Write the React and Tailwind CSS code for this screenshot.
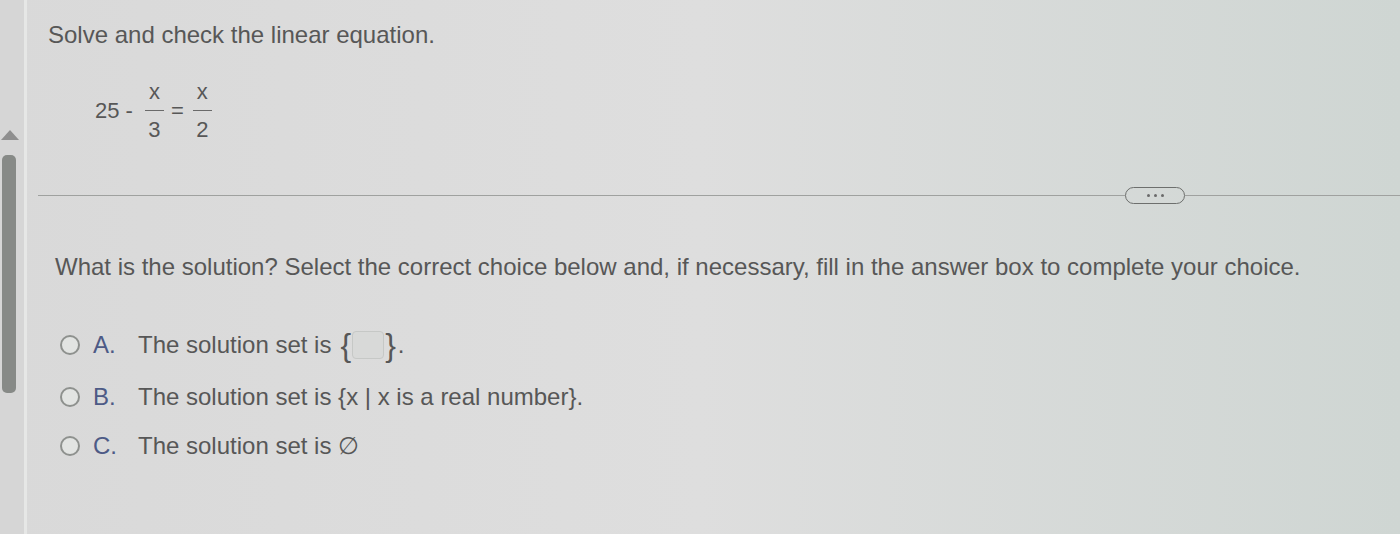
import React from 'react';

const font = { fontFamily: '"Liberation Sans", Arial, sans-serif' };

const Fraction = ({ top, bottom, className }) => (
  <span className={`inline-flex flex-col items-center leading-none ${className}`}>
    <span className="h-[21px] pb-[8px] box-content">{top}</span>
    <span className="w-[19px] h-[1px] bg-[#6a6a6a]"></span>
    <span className="h-[21px] pt-[8px] box-content">{bottom}</span>
  </span>
);

const Radio = () => (
  <span className="w-[20px] h-[20px] rounded-full border-2 border-[#8e918e] bg-[#e2e4e2]"></span>
);

const Choice = ({ letter, children, className }) => (
  <div className={`flex items-center h-[28px] ${className}`}>
    <div className="w-[38px] flex justify-center">
      <Radio />
    </div>
    <span className="text-[#4d5a86] w-[49px] pl-[4px]">{letter}.</span>
    <span className="flex items-center">{children}</span>
  </div>
);

export default function App() {
  return (
    <div
      className="w-[1400px] h-[534px] flex overflow-hidden text-[#575757] bg-gradient-to-r from-[#d9d9d9] via-[#dedede] to-[#cfd6d3]"
      style={font}
    >
      {/* scrollbar strip */}
      <div className="w-[27px] shrink-0 flex flex-col border-r-[3px] border-[#e6e7e6] bg-[#d6d6d6]">
        <div className="h-[130px]"></div>
        <div className="w-0 h-0 ml-[1px] border-l-[9px] border-r-[9px] border-b-[10px] border-l-transparent border-r-transparent border-b-[#8f8f8f]"></div>
        <div className="h-[15px]"></div>
        <div className="w-[14px] h-[238px] ml-[2px] rounded-[5px] bg-[#878a87]"></div>
      </div>

      <div className="flex-1 flex flex-col">
        <div className="pl-[21px] pt-[21px] text-[24px] leading-[28px]">
          Solve and check the linear equation.
        </div>

        <div className="pl-[68px] mt-[32px] flex items-center text-[22px]">
          <span>25 -</span>
          <Fraction top="x" bottom="3" className="ml-[12px] mr-[7px]" />
          <span>=</span>
          <Fraction top="x" bottom="2" className="ml-[9px]" />
        </div>

        <div className="mt-[47px] ml-[11px] flex items-center h-[17px]">
          <div className="w-[1087px] h-[1px] bg-[#9fa19f]"></div>
          <div className="w-[60px] h-[17px] rounded-full border-[1.5px] border-[#6d6f6d] flex items-center justify-center gap-[4px]">
            <span className="w-[3px] h-[3px] rounded-full bg-[#6a6a6a]"></span>
            <span className="w-[3px] h-[3px] rounded-full bg-[#6a6a6a]"></span>
            <span className="w-[3px] h-[3px] rounded-full bg-[#6a6a6a]"></span>
          </div>
          <div className="flex-1 h-[1px] bg-[#9fa19f]"></div>
        </div>

        <div className="pl-[28px] mt-[49px] text-[24px] leading-[28px]">
          What is the solution? Select the correct choice below and, if necessary, fill in the answer box to complete your choice.
        </div>

        <div className="pl-[24px] flex flex-col text-[24px]">
          <Choice letter="A" className="mt-[50px]">
            The solution set is
            <span className="ml-[9px] inline-flex items-center">
              <span className="text-[32px] leading-none font-light">{'{'}</span>
              <span className="w-[32px] h-[28px] rounded-[4px] border border-[#c6c8c6] bg-[#d8d9d8] mx-[1px]"></span>
              <span className="text-[32px] leading-none font-light">{'}'}</span>
              <span className="ml-[2px]">.</span>
            </span>
          </Choice>
          <Choice letter="B" className="mt-[24px]">The solution set is {'{'}x | x is a real number{'}'}.</Choice>
          <Choice letter="C" className="mt-[21px]">
            The solution set is <span className="ml-[7px]">∅</span>
          </Choice>
        </div>
      </div>
    </div>
  );
}
